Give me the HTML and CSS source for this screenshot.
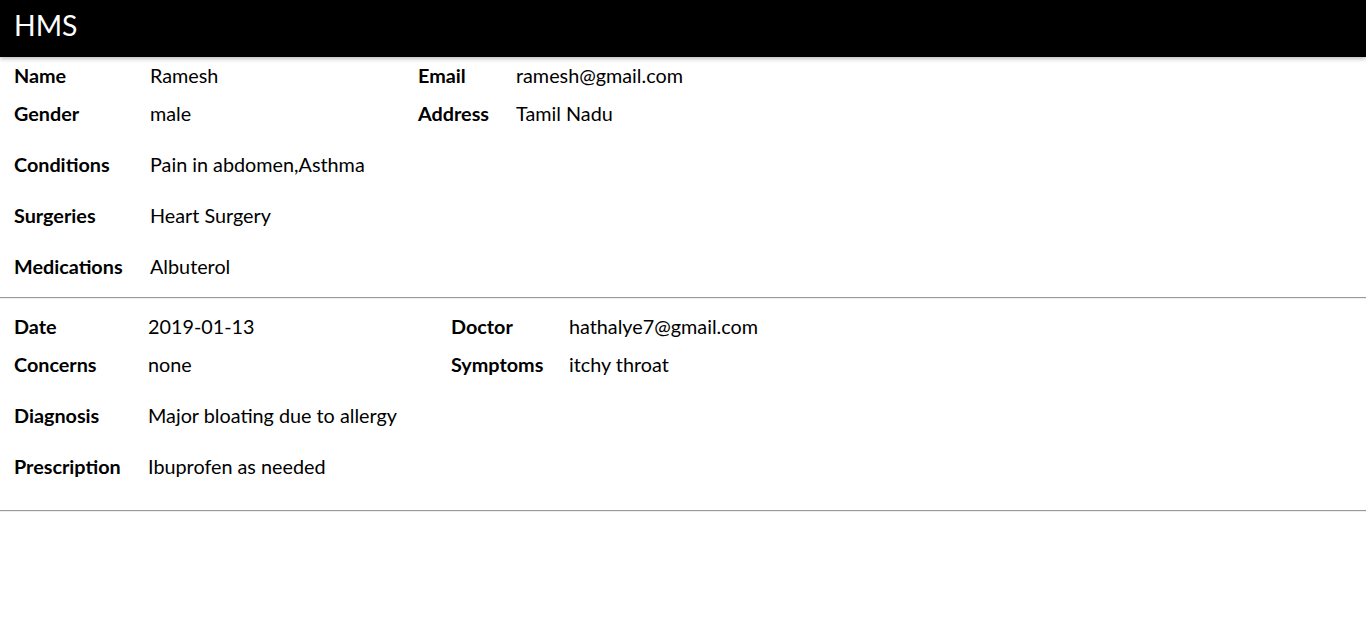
FILE: index.html
```html
<!DOCTYPE html>
<html>
<head>
<meta charset="utf-8">
<title>HMS</title>
<link rel="stylesheet" href="styles.css">
</head>
<body>
<header class="topbar"><span class="brand">HMS</span></header>
<section class="record first">
  <div class="grid g1">
    <div class="lbl">Name</div><div class="val">Ramesh</div>
    <div class="lbl">Email</div><div class="val">ramesh@gmail.com</div>
    <div class="lbl">Gender</div><div class="val">male</div>
    <div class="lbl">Address</div><div class="val">Tamil Nadu</div>
  </div>
  <div class="line l1"><div class="lbl">Conditions</div><div class="val">Pain in abdomen,Asthma</div></div>
  <div class="line l1"><div class="lbl">Surgeries</div><div class="val">Heart Surgery</div></div>
  <div class="line l1"><div class="lbl">Medications</div><div class="val">Albuterol</div></div>
</section>
<hr class="sep">
<section class="record second">
  <div class="grid g2">
    <div class="lbl">Date</div><div class="val">2019-01-13</div>
    <div class="lbl">Doctor</div><div class="val">hathalye7@gmail.com</div>
    <div class="lbl">Concerns</div><div class="val">none</div>
    <div class="lbl">Symptoms</div><div class="val">itchy throat</div>
  </div>
  <div class="line l2"><div class="lbl">Diagnosis</div><div class="val">Major bloating due to allergy</div></div>
  <div class="line l2"><div class="lbl">Prescription</div><div class="val">Ibuprofen as needed</div></div>
</section>
<hr class="sep">
</body>
</html>
```
FILE: styles.css
```css
html, body {
  margin: 0;
  padding: 0;
  background: #fff;
}
body {
  font-family: Lato, "Liberation Sans", sans-serif;
  font-size: 19.8px;
  color: #000;
}
.topbar {
  height: 57px;
  box-sizing: border-box;
  background: #000;
  display: flex;
  align-items: flex-start;
  padding: 11px 0 0 14px;
  box-shadow: 0 2px 4px rgba(0,0,0,0.25);
  position: relative;
}
.brand {
  color: #fff;
  font-size: 28.4px;
  line-height: 1;
}
.record {
  padding: 0 14px;
}
.grid {
  display: grid;
  grid-auto-rows: 38px;
  align-items: center;
}
.g1 { grid-template-columns: 136px 268px 98px 1fr; }
.g2 { grid-template-columns: 134px 303px 118px 1fr; }
.line {
  display: grid;
  height: 38px;
  align-items: center;
  margin-top: 13px;
}
.l1 { grid-template-columns: 136px 1fr; }
.l2 { grid-template-columns: 134px 1fr; }
.lbl, .val { padding-bottom: 2px; }
.lbl { font-weight: 700; }
.first { padding-bottom: 11px; }
.second { padding-top: 9px; padding-bottom: 24px; }
.sep {
  margin: 0;
  border: 0;
  border-top: 1px solid #9a9a9a;
  border-bottom: 1px solid #eee;
  height: 0;
}
```
